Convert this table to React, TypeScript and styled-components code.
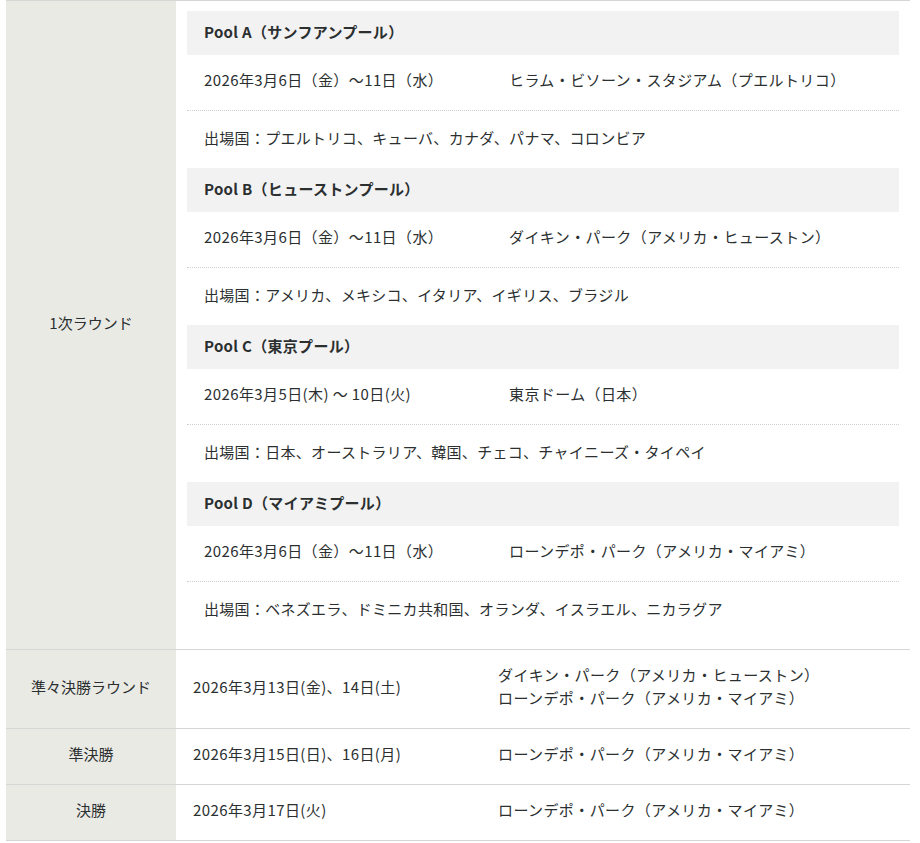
import React from "react";
import styled, { createGlobalStyle } from "styled-components";

const Global = createGlobalStyle`
  html, body { margin: 0; padding: 0; background: #fff; }
  body {
    font-family: "Noto Sans CJK JP", "Noto Sans", sans-serif;
    color: #2b2f30;
    font-size: 15px;
  }
`;

const Page = styled.div`
  padding: 0 10px 0 6px;
`;

const Table = styled.div`
  width: 904px;
  border-bottom: 1px solid #d6d6d6;
`;

const Row = styled.div`
  display: grid;
  grid-template-columns: 170px 1fr;
  border-top: 1px solid #d6d6d6;
`;

const Label = styled.div`
  background: #eaeae5;
  display: flex;
  align-items: center;
  justify-content: center;
  text-align: center;
  line-height: 23px;
  padding-bottom: 6px;
`;

const PoolsCell = styled.div`
  padding: 10px 11px 10px 11px;
`;

const Pool = styled.div`
  display: flex;
  flex-direction: column;
`;

const PoolHeader = styled.div`
  height: 44px;
  box-sizing: border-box;
  background: #f2f2f2;
  display: flex;
  align-items: center;
  padding: 0 17px 4px;
  font-weight: 700;
  letter-spacing: 0.3px;
`;

const Line = styled.div<{ $dotted?: boolean }>`
  display: grid;
  grid-template-columns: 305px 1fr;
  align-items: center;
  line-height: 23px;
  letter-spacing: 0.4px;
  border-bottom: ${(p) => (p.$dotted ? "1px dotted #cfcfcf" : "none")};
`;

const Cell = styled.div`
  padding: 13px 17px 19px;
`;

const Countries = styled.div`
  height: 57px;
  box-sizing: border-box;
  display: flex;
  align-items: center;
  padding: 0 17px 4px;
  letter-spacing: 0.3px;
`;

const pools = [
  {
    name: "Pool A（サンフアンプール）",
    date: "2026年3月6日（金）～11日（水）",
    venue: "ヒラム・ビソーン・スタジアム（プエルトリコ）",
    countries: "出場国：プエルトリコ、キューバ、カナダ、パナマ、コロンビア",
  },
  {
    name: "Pool B（ヒューストンプール）",
    date: "2026年3月6日（金）～11日（水）",
    venue: "ダイキン・パーク（アメリカ・ヒューストン）",
    countries: "出場国：アメリカ、メキシコ、イタリア、イギリス、ブラジル",
  },
  {
    name: "Pool C（東京プール）",
    date: "2026年3月5日(木) ～ 10日(火)",
    venue: "東京ドーム（日本）",
    countries: "出場国：日本、オーストラリア、韓国、チェコ、チャイニーズ・タイペイ",
  },
  {
    name: "Pool D（マイアミプール）",
    date: "2026年3月6日（金）～11日（水）",
    venue: "ローンデポ・パーク（アメリカ・マイアミ）",
    countries: "出場国：ベネズエラ、ドミニカ共和国、オランダ、イスラエル、ニカラグア",
  },
];

const finals = [
  {
    label: "準々決勝ラウンド",
    date: "2026年3月13日(金)、14日(土)",
    venues: ["ダイキン・パーク（アメリカ・ヒューストン）", "ローンデポ・パーク（アメリカ・マイアミ）"],
  },
  {
    label: "準決勝",
    date: "2026年3月15日(日)、16日(月)",
    venues: ["ローンデポ・パーク（アメリカ・マイアミ）"],
  },
  {
    label: "決勝",
    date: "2026年3月17日(火)",
    venues: ["ローンデポ・パーク（アメリカ・マイアミ）"],
  },
];

export default function App() {
  return (
    <Page>
      <Global />
      <Table>
        <Row>
          <Label>1次ラウンド</Label>
          <PoolsCell>
            {pools.map((p) => (
              <Pool key={p.name}>
                <PoolHeader>{p.name}</PoolHeader>
                <Line $dotted>
                  <Cell>{p.date}</Cell>
                  <Cell>{p.venue}</Cell>
                </Line>
                <Countries>{p.countries}</Countries>
              </Pool>
            ))}
          </PoolsCell>
        </Row>
        {finals.map((f) => (
          <Row key={f.label}>
            <Label>{f.label}</Label>
            <Line>
              <Cell>{f.date}</Cell>
              <Cell>
                {f.venues.map((v) => (
                  <div key={v}>{v}</div>
                ))}
              </Cell>
            </Line>
          </Row>
        ))}
      </Table>
    </Page>
  );
}
